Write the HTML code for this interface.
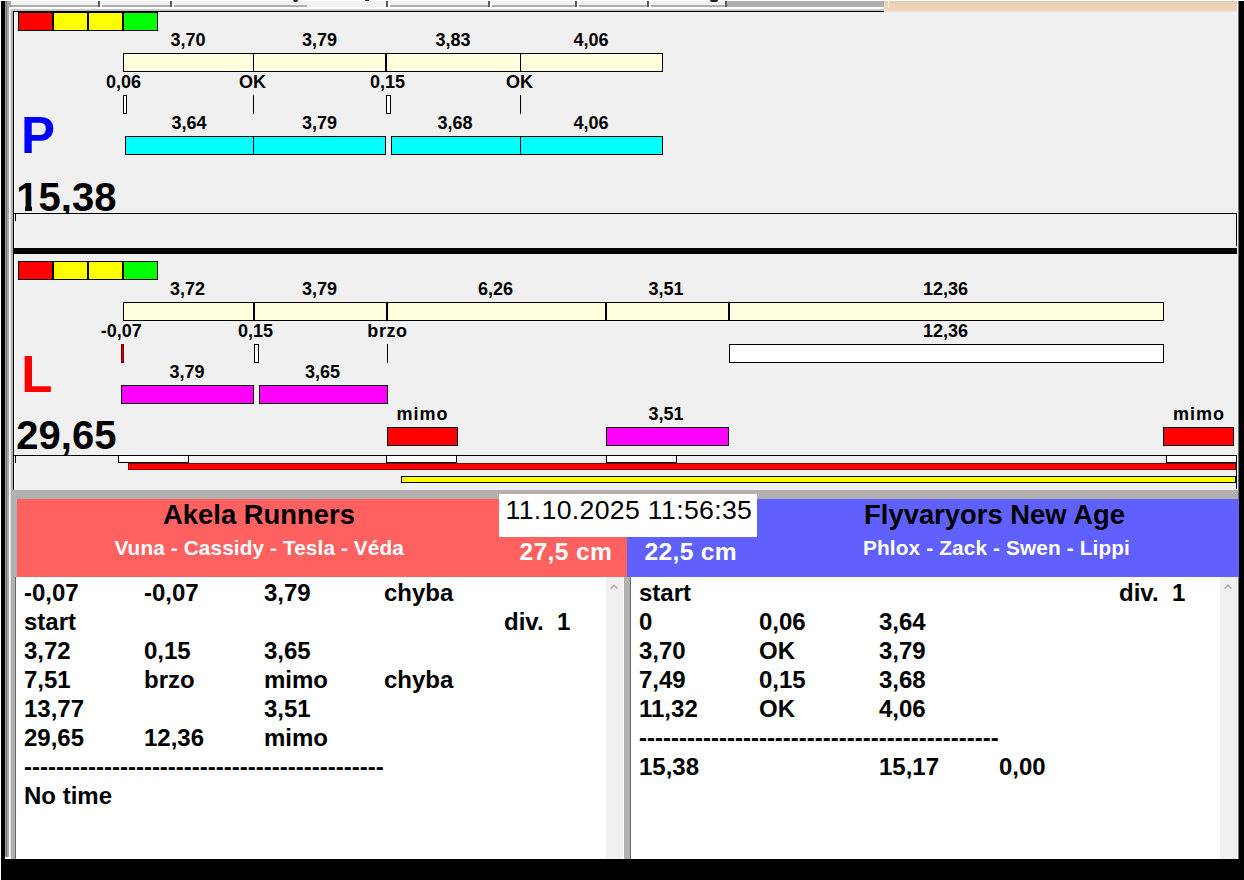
<!DOCTYPE html>
<html><head><meta charset="utf-8"><title>Flyball</title>
<style>
html,body{margin:0;padding:0;}
body{width:1244px;height:880px;position:relative;overflow:hidden;background:#fff;font-family:"Liberation Sans",sans-serif;}
.b{position:absolute;}
.t{position:absolute;line-height:1;white-space:nowrap;font-weight:bold;}
</style></head><body>
<div class="b" style="left:1px;top:1px;width:4px;height:879px;background:#000;"></div>
<div class="b" style="left:5px;top:1px;width:1px;height:858px;background:#a0a0a0;"></div>
<div class="b" style="left:6px;top:1px;width:1px;height:858px;background:#707070;"></div>
<div class="b" style="left:7px;top:1px;width:2px;height:858px;background:#a8a8a8;"></div>
<div class="b" style="left:9px;top:1px;width:2px;height:7px;background:#a8a8a8;"></div>
<div class="b" style="left:9px;top:8px;width:1px;height:850px;background:#fff;"></div>
<div class="b" style="left:10px;top:8px;width:1px;height:850px;background:#e4e4e4;"></div>
<div class="b" style="left:11px;top:1px;width:873px;height:4px;background:#f2f2f3;"></div>
<div class="b" style="left:11px;top:5px;width:716px;height:2px;background:#adadad;"></div>
<div class="b" style="left:98px;top:1px;width:2px;height:6px;background:#5c5c5c;"></div>
<div class="b" style="left:100px;top:1px;width:2px;height:6px;background:#fcfcfc;"></div>
<div class="b" style="left:170px;top:1px;width:2px;height:6px;background:#5c5c5c;"></div>
<div class="b" style="left:172px;top:1px;width:2px;height:6px;background:#fcfcfc;"></div>
<div class="b" style="left:386px;top:1px;width:2px;height:6px;background:#5c5c5c;"></div>
<div class="b" style="left:388px;top:1px;width:2px;height:6px;background:#fcfcfc;"></div>
<div class="b" style="left:488px;top:1px;width:2px;height:6px;background:#5c5c5c;"></div>
<div class="b" style="left:490px;top:1px;width:2px;height:6px;background:#fcfcfc;"></div>
<div class="b" style="left:575px;top:1px;width:2px;height:6px;background:#5c5c5c;"></div>
<div class="b" style="left:577px;top:1px;width:2px;height:6px;background:#fcfcfc;"></div>
<div class="b" style="left:647px;top:1px;width:2px;height:6px;background:#5c5c5c;"></div>
<div class="b" style="left:649px;top:1px;width:2px;height:6px;background:#fcfcfc;"></div>
<div class="b" style="left:725px;top:1px;width:2px;height:6px;background:#5c5c5c;"></div>
<div class="b" style="left:727px;top:1px;width:2px;height:6px;background:#fcfcfc;"></div>
<div class="b" style="left:307px;top:5px;width:79px;height:2px;background:#f2f2f3;"></div>
<div class="b" style="left:727px;top:1px;width:157px;height:6px;background:#aeaeae;"></div>
<div class="b" style="left:9px;top:7px;width:875px;height:2px;background:#fff;"></div>
<div class="b" style="left:11px;top:9px;width:873px;height:2px;background:#c6c6c6;"></div>
<div class="b" style="left:13px;top:11px;width:871px;height:1px;background:#000;"></div>
<div class="b" style="left:293px;top:0px;width:5px;height:2px;background:#222;border-radius:0 0 3px 3px;"></div>
<div class="b" style="left:365px;top:0px;width:4px;height:1px;background:#333;"></div>
<div class="b" style="left:710px;top:0px;width:8px;height:2px;background:#222;border-radius:0 0 4px 4px;"></div>
<div class="b" style="left:884px;top:1px;width:353px;height:11px;background:linear-gradient(#dccabb 0,#efd2b8 30%,#f0d2b6 70%,#f0e0d4 100%);"></div>
<div class="b" style="left:888px;top:1px;width:1px;height:7px;background:#fff4e0;"></div>
<div class="b" style="left:1238px;top:1px;width:1px;height:879px;background:#707070;"></div>
<div class="b" style="left:1239px;top:1px;width:5px;height:879px;background:#000;"></div>
<div class="b" style="left:1px;top:859px;width:1243px;height:21px;background:#000;"></div>
<div class="b" style="left:5px;top:857px;width:6px;height:2px;background:#fff;"></div>
<div class="b" style="left:11px;top:11px;width:2px;height:479px;background:#b0b0b0;"></div>
<div class="b" style="left:13px;top:11px;width:1px;height:479px;background:#000;"></div>
<div class="b" style="left:14px;top:12px;width:1223px;height:236px;background:#f0f0f0;"></div>
<div class="b" style="left:14px;top:248px;width:1223px;height:6px;background:#000;"></div>
<div class="b" style="left:14px;top:254px;width:1223px;height:236px;background:#f0f0f0;"></div>
<div class="b" style="left:1237px;top:12px;width:1px;height:478px;background:#f2f2f2;"></div>
<div class="b" style="left:14px;top:12px;width:1px;height:236px;background:#fff;"></div>
<div class="b" style="left:14px;top:255px;width:1px;height:235px;background:#fff;"></div>
<div class="b" style="left:18px;top:12px;width:35px;height:19px;background:#ff0000;border:1px solid #000;box-sizing:border-box;"></div>
<div class="b" style="left:53px;top:12px;width:35px;height:19px;background:#ffff00;border:1px solid #000;box-sizing:border-box;"></div>
<div class="b" style="left:88px;top:12px;width:35px;height:19px;background:#ffff00;border:1px solid #000;box-sizing:border-box;"></div>
<div class="b" style="left:123px;top:12px;width:35px;height:19px;background:#00ff00;border:1px solid #000;box-sizing:border-box;"></div>
<div class="b" style="left:123px;top:53px;width:540px;height:19px;background:#ffffde;border:1px solid #000;box-sizing:border-box;"></div>
<div class="b" style="left:253px;top:53px;width:1px;height:19px;background:#000;"></div>
<div class="b" style="left:385px;top:53px;width:2px;height:19px;background:#000;"></div>
<div class="b" style="left:520px;top:53px;width:1px;height:19px;background:#000;"></div>
<div class="t" style="top:30.76px;font-size:18px;color:#000;left:-12px;width:400px;text-align:center;">3,70</div>
<div class="t" style="top:30.76px;font-size:18px;color:#000;left:119.5px;width:400px;text-align:center;">3,79</div>
<div class="t" style="top:30.76px;font-size:18px;color:#000;left:253px;width:400px;text-align:center;">3,83</div>
<div class="t" style="top:30.76px;font-size:18px;color:#000;left:391px;width:400px;text-align:center;">4,06</div>
<div class="t" style="top:72.76px;font-size:18px;color:#000;left:-76.6px;width:400px;text-align:center;">0,06</div>
<div class="t" style="top:72.76px;font-size:18px;color:#000;left:52.5px;width:400px;text-align:center;">OK</div>
<div class="t" style="top:72.76px;font-size:18px;color:#000;left:187.5px;width:400px;text-align:center;">0,15</div>
<div class="t" style="top:72.76px;font-size:18px;color:#000;left:319.5px;width:400px;text-align:center;">OK</div>
<div class="t" style="top:113.76px;font-size:18px;color:#000;left:-11px;width:400px;text-align:center;">3,64</div>
<div class="t" style="top:113.76px;font-size:18px;color:#000;left:119.5px;width:400px;text-align:center;">3,79</div>
<div class="t" style="top:113.76px;font-size:18px;color:#000;left:255px;width:400px;text-align:center;">3,68</div>
<div class="t" style="top:113.76px;font-size:18px;color:#000;left:391px;width:400px;text-align:center;">4,06</div>
<div class="b" style="left:123px;top:95px;width:4px;height:19px;background:#fff;border:1px solid #000;box-sizing:border-box;"></div>
<div class="b" style="left:253px;top:95px;width:1px;height:19px;background:#000;"></div>
<div class="b" style="left:386px;top:95px;width:5px;height:19px;background:#fff;border:1px solid #000;box-sizing:border-box;"></div>
<div class="b" style="left:520px;top:95px;width:1px;height:19px;background:#000;"></div>
<div class="b" style="left:125px;top:136px;width:261px;height:19px;background:#00ffff;border:1px solid #000;box-sizing:border-box;"></div>
<div class="b" style="left:253px;top:136px;width:1px;height:19px;background:#000;"></div>
<div class="b" style="left:391px;top:136px;width:272px;height:19px;background:#00ffff;border:1px solid #000;box-sizing:border-box;"></div>
<div class="b" style="left:520px;top:136px;width:1px;height:19px;background:#000;"></div>
<div class="t" style="top:109.63px;font-size:51px;color:#0000ff;left:21px;">P</div>
<div class="b" style="left:14px;top:170px;width:300px;height:43px;overflow:hidden;">
<div class="t" style="top:7.04px;font-size:40px;color:#000;left:2.3px;">15,38</div>
<div class="b" style="left:2px;top:35px;width:9px;height:7px;background:#f0f0f0;"></div>
<div class="b" style="left:18px;top:35px;width:7px;height:7px;background:#f0f0f0;"></div>
</div>
<div class="b" style="left:14px;top:213px;width:1223px;height:1px;background:#000;"></div>
<div class="b" style="left:1236px;top:213px;width:1px;height:33px;background:#000;"></div>
<div class="b" style="left:15px;top:214px;width:1px;height:7px;background:#000;"></div>
<div class="b" style="left:18px;top:261px;width:35px;height:19px;background:#ff0000;border:1px solid #000;box-sizing:border-box;"></div>
<div class="b" style="left:53px;top:261px;width:35px;height:19px;background:#ffff00;border:1px solid #000;box-sizing:border-box;"></div>
<div class="b" style="left:88px;top:261px;width:35px;height:19px;background:#ffff00;border:1px solid #000;box-sizing:border-box;"></div>
<div class="b" style="left:123px;top:261px;width:35px;height:19px;background:#00ff00;border:1px solid #000;box-sizing:border-box;"></div>
<div class="b" style="left:123px;top:302px;width:1041px;height:19px;background:#ffffde;border:1px solid #000;box-sizing:border-box;"></div>
<div class="b" style="left:253px;top:302px;width:2px;height:19px;background:#000;"></div>
<div class="b" style="left:386px;top:302px;width:2px;height:19px;background:#000;"></div>
<div class="b" style="left:605px;top:302px;width:2px;height:19px;background:#000;"></div>
<div class="b" style="left:728px;top:302px;width:2px;height:19px;background:#000;"></div>
<div class="t" style="top:279.76px;font-size:18px;color:#000;left:-12.5px;width:400px;text-align:center;">3,72</div>
<div class="t" style="top:279.76px;font-size:18px;color:#000;left:119.5px;width:400px;text-align:center;">3,79</div>
<div class="t" style="top:279.76px;font-size:18px;color:#000;left:295.5px;width:400px;text-align:center;">6,26</div>
<div class="t" style="top:279.76px;font-size:18px;color:#000;left:466px;width:400px;text-align:center;">3,51</div>
<div class="t" style="top:279.76px;font-size:18px;color:#000;left:745.5px;width:400px;text-align:center;">12,36</div>
<div class="t" style="top:321.76px;font-size:18px;color:#000;left:-78.7px;width:400px;text-align:center;">-0,07</div>
<div class="t" style="top:321.76px;font-size:18px;color:#000;left:55.5px;width:400px;text-align:center;">0,15</div>
<div class="t" style="top:321.76px;font-size:18px;color:#000;left:187.5px;width:400px;text-align:center;letter-spacing:0.6px;">brzo</div>
<div class="t" style="top:321.76px;font-size:18px;color:#000;left:745.5px;width:400px;text-align:center;">12,36</div>
<div class="t" style="top:362.76px;font-size:18px;color:#000;left:-13px;width:400px;text-align:center;">3,79</div>
<div class="t" style="top:362.76px;font-size:18px;color:#000;left:122.5px;width:400px;text-align:center;">3,65</div>
<div class="t" style="top:404.96px;font-size:18px;color:#000;left:222.5px;width:400px;text-align:center;letter-spacing:1px;">mimo</div>
<div class="t" style="top:404.96px;font-size:18px;color:#000;left:466px;width:400px;text-align:center;">3,51</div>
<div class="t" style="top:404.96px;font-size:18px;color:#000;left:999.0px;width:400px;text-align:center;letter-spacing:1px;">mimo</div>
<div class="b" style="left:121px;top:344px;width:3px;height:19px;background:#e00000;border:1px solid #700000;box-sizing:border-box;"></div>
<div class="b" style="left:254px;top:344px;width:5px;height:19px;background:#fff;border:1px solid #000;box-sizing:border-box;"></div>
<div class="b" style="left:387px;top:344px;width:1px;height:19px;background:#000;"></div>
<div class="b" style="left:729px;top:344px;width:435px;height:19px;background:#fff;border:1px solid #000;box-sizing:border-box;"></div>
<div class="b" style="left:121px;top:385px;width:133px;height:19px;background:#ff00ff;border:1px solid #000;box-sizing:border-box;"></div>
<div class="b" style="left:259px;top:385px;width:129px;height:19px;background:#ff00ff;border:1px solid #000;box-sizing:border-box;"></div>
<div class="b" style="left:387px;top:427px;width:71px;height:19px;background:#ff0000;border:1px solid #000;box-sizing:border-box;"></div>
<div class="b" style="left:606px;top:427px;width:123px;height:19px;background:#ff00ff;border:1px solid #000;box-sizing:border-box;"></div>
<div class="b" style="left:1163px;top:427px;width:71px;height:19px;background:#ff0000;border:1px solid #000;box-sizing:border-box;"></div>
<div class="t" style="top:348.63px;font-size:51px;color:#ff0000;left:21.2px;">L</div>
<div class="b" style="left:14px;top:410px;width:300px;height:45px;overflow:hidden;">
<div class="t" style="top:5.14px;font-size:40px;color:#000;left:2.3px;">29,65</div>
</div>
<div class="b" style="left:14px;top:455px;width:1223px;height:1px;background:#000;"></div>
<div class="b" style="left:1236px;top:455px;width:1px;height:34px;background:#000;"></div>
<div class="b" style="left:15px;top:456px;width:1px;height:7px;background:#000;"></div>
<div class="b" style="left:118px;top:455px;width:71px;height:8px;background:#fff;border:1px solid #000;box-sizing:border-box;"></div>
<div class="b" style="left:386px;top:455px;width:71px;height:8px;background:#fff;border:1px solid #000;box-sizing:border-box;"></div>
<div class="b" style="left:606px;top:455px;width:71px;height:8px;background:#fff;border:1px solid #000;box-sizing:border-box;"></div>
<div class="b" style="left:1166px;top:455px;width:71px;height:8px;background:#fff;border:1px solid #000;box-sizing:border-box;"></div>
<div class="b" style="left:128px;top:463px;width:1108px;height:7px;background:#ff0000;border:1px solid #900000;box-sizing:border-box;"></div>
<div class="b" style="left:401px;top:476px;width:835px;height:7px;background:#ffff00;border:1px solid #000;box-sizing:border-box;"></div>
<div class="b" style="left:11px;top:490px;width:1227px;height:369px;background:#b0b0b0;"></div>
<div class="b" style="left:17px;top:499px;width:610px;height:78px;background:#ff6060;"></div>
<div class="b" style="left:627px;top:499px;width:612px;height:78px;background:#6060ff;"></div>
<div class="b" style="left:499px;top:494px;width:258px;height:43px;background:#fff;"></div>
<div class="t" style="top:497.22px;font-size:26.67px;color:#000;font-weight:normal;left:505.5px;letter-spacing:0.32px;">11.10.2025 11:56:35</div>
<div class="t" style="top:500.71px;font-size:27.4px;color:#000;left:59px;width:400px;text-align:center;">Akela Runners</div>
<div class="t" style="top:537.79px;font-size:20.8px;color:#fff;left:59.19999999999999px;width:400px;text-align:center;letter-spacing:0.1px;">Vuna - Cassidy - Tesla - V&eacute;da</div>
<div class="t" style="top:540.18px;font-size:24.6px;color:#fff;left:212.20000000000005px;width:400px;text-align:right;letter-spacing:0.35px;">27,5 cm</div>
<div class="t" style="top:540.18px;font-size:24.6px;color:#fff;left:644.4px;letter-spacing:0.35px;">22,5 cm</div>
<div class="t" style="top:500.71px;font-size:27.4px;color:#000;left:794.5px;width:400px;text-align:center;">Flyvaryors New Age</div>
<div class="t" style="top:537.79px;font-size:20.8px;color:#fff;left:796.5px;width:400px;text-align:center;letter-spacing:0.13px;">Phlox - Zack - Swen - Lippi</div>
<div class="b" style="left:16px;top:577px;width:590px;height:282px;background:#fff;"></div>
<div class="b" style="left:606px;top:577px;width:17px;height:282px;background:#f0f0f0;"></div>
<div class="b" style="left:623px;top:577px;width:1px;height:282px;background:#fff;"></div>
<div class="b" style="left:630px;top:577px;width:1px;height:282px;background:#686868;"></div>
<div class="b" style="left:631px;top:577px;width:589px;height:282px;background:#fff;"></div>
<div class="b" style="left:1220px;top:577px;width:16px;height:282px;background:#f0f0f0;"></div>
<div class="b" style="left:1236px;top:577px;width:1px;height:282px;background:#e6e6e6;"></div>
<div class="b" style="left:1237px;top:577px;width:1px;height:282px;background:#fff;"></div>
<div class="b" style="left:15px;top:577px;width:1px;height:282px;background:#686868;"></div>
<div class="t" style="top:580.68px;font-size:24px;color:#000;left:24px;">-0,07</div>
<div class="t" style="top:580.68px;font-size:24px;color:#000;left:144px;">-0,07</div>
<div class="t" style="top:580.68px;font-size:24px;color:#000;left:264px;">3,79</div>
<div class="t" style="top:580.68px;font-size:24px;color:#000;left:384px;">chyba</div>
<div class="t" style="top:609.68px;font-size:24px;color:#000;left:24px;">start</div>
<div class="t" style="top:609.68px;font-size:24px;color:#000;left:504px;">div.&nbsp; 1</div>
<div class="t" style="top:638.68px;font-size:24px;color:#000;left:24px;">3,72</div>
<div class="t" style="top:638.68px;font-size:24px;color:#000;left:144px;">0,15</div>
<div class="t" style="top:638.68px;font-size:24px;color:#000;left:264px;">3,65</div>
<div class="t" style="top:667.68px;font-size:24px;color:#000;left:24px;">7,51</div>
<div class="t" style="top:667.68px;font-size:24px;color:#000;left:144px;">brzo</div>
<div class="t" style="top:667.68px;font-size:24px;color:#000;left:264px;">mimo</div>
<div class="t" style="top:667.68px;font-size:24px;color:#000;left:384px;">chyba</div>
<div class="t" style="top:696.68px;font-size:24px;color:#000;left:24px;">13,77</div>
<div class="t" style="top:696.68px;font-size:24px;color:#000;left:264px;">3,51</div>
<div class="t" style="top:725.68px;font-size:24px;color:#000;left:24px;">29,65</div>
<div class="t" style="top:725.68px;font-size:24px;color:#000;left:144px;">12,36</div>
<div class="t" style="top:725.68px;font-size:24px;color:#000;left:264px;">mimo</div>
<div class="t" style="top:754.68px;font-size:24px;color:#000;left:24px;">---------------------------------------------</div>
<div class="t" style="top:783.68px;font-size:24px;color:#000;left:24px;">No time</div>
<div class="t" style="top:580.68px;font-size:24px;color:#000;left:639px;">start</div>
<div class="t" style="top:580.68px;font-size:24px;color:#000;left:1119px;">div.&nbsp; 1</div>
<div class="t" style="top:609.68px;font-size:24px;color:#000;left:639px;">0</div>
<div class="t" style="top:609.68px;font-size:24px;color:#000;left:759px;">0,06</div>
<div class="t" style="top:609.68px;font-size:24px;color:#000;left:879px;">3,64</div>
<div class="t" style="top:638.68px;font-size:24px;color:#000;left:639px;">3,70</div>
<div class="t" style="top:638.68px;font-size:24px;color:#000;left:759px;">OK</div>
<div class="t" style="top:638.68px;font-size:24px;color:#000;left:879px;">3,79</div>
<div class="t" style="top:667.68px;font-size:24px;color:#000;left:639px;">7,49</div>
<div class="t" style="top:667.68px;font-size:24px;color:#000;left:759px;">0,15</div>
<div class="t" style="top:667.68px;font-size:24px;color:#000;left:879px;">3,68</div>
<div class="t" style="top:696.68px;font-size:24px;color:#000;left:639px;">11,32</div>
<div class="t" style="top:696.68px;font-size:24px;color:#000;left:759px;">OK</div>
<div class="t" style="top:696.68px;font-size:24px;color:#000;left:879px;">4,06</div>
<div class="t" style="top:725.68px;font-size:24px;color:#000;left:639px;">---------------------------------------------</div>
<div class="t" style="top:754.68px;font-size:24px;color:#000;left:639px;">15,38</div>
<div class="t" style="top:754.68px;font-size:24px;color:#000;left:879px;">15,17</div>
<div class="t" style="top:754.68px;font-size:24px;color:#000;left:999px;">0,00</div>
<svg class="b" style="left:608.7px;top:581px" width="10" height="10" viewBox="0 0 10 10"><path d="M1.6 7.6 L5 4.2 L8.4 7.6" fill="none" stroke="#adadad" stroke-width="1.5"/></svg>
<svg class="b" style="left:1222.5px;top:581px" width="10" height="10" viewBox="0 0 10 10"><path d="M1.6 7.6 L5 4.2 L8.4 7.6" fill="none" stroke="#adadad" stroke-width="1.5"/></svg>
</body></html>
